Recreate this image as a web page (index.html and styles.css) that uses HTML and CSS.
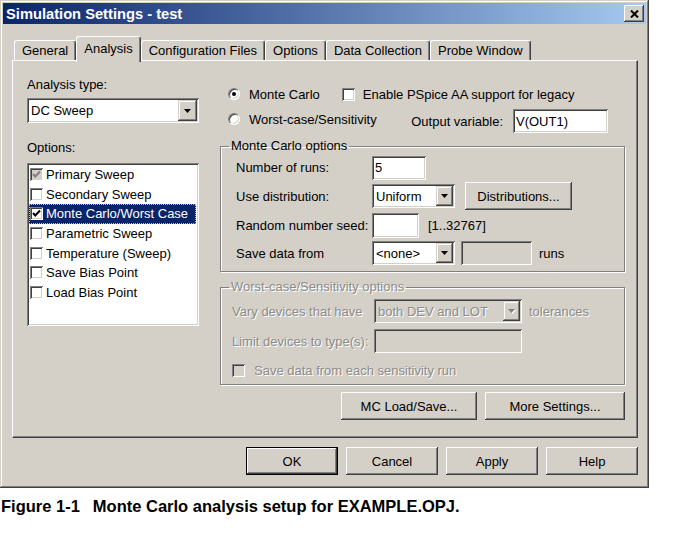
FILE: index.html
```html
<!DOCTYPE html>
<html>
<head>
<meta charset="utf-8">
<title>Simulation Settings - test</title>
<link rel="stylesheet" href="styles.css">
</head>
<body>
<div class="window">
  <div class="titlebar">
    <span class="title">Simulation Settings - test</span>
    <span class="close"><svg width="9" height="8" viewBox="0 0 9 8"><path d="M1 0.5 L8 7.5 M8 0.5 L1 7.5" stroke="#000" stroke-width="2" fill="none"/></svg></span>
  </div>
  <div class="tabs">
    <div class="tab">General</div>
    <div class="tab active">Analysis</div>
    <div class="tab">Configuration Files</div>
    <div class="tab">Options</div>
    <div class="tab">Data Collection</div>
    <div class="tab">Probe Window</div>
  </div>
  <div class="panel">
    <div class="left">
      <div class="lbl">Analysis type:</div>
      <div class="combo type-combo"><span class="val">DC Sweep</span><span class="arrow"><svg width="7" height="4" viewBox="0 0 7 4"><path d="M0 0 H7 L3.5 4 Z" fill="#000"/></svg></span></div>
      <div class="lbl options-lbl">Options:</div>
      <ul class="listbox">
        <li><span class="cb grayed"><svg width="9" height="9" viewBox="0 0 9 9"><path d="M1 4 L3.3 6.5 L8 1.5" fill="none" stroke="#808080" stroke-width="2"/></svg></span>Primary Sweep</li>
        <li><span class="cb"></span>Secondary Sweep</li>
        <li class="sel"><span class="cb"><svg width="9" height="9" viewBox="0 0 9 9"><path d="M1 4 L3.3 6.5 L8 1.5" fill="none" stroke="#000" stroke-width="2"/></svg></span><span class="sel-text">Monte Carlo/Worst Case</span></li>
        <li><span class="cb"></span>Parametric Sweep</li>
        <li><span class="cb"></span>Temperature (Sweep)</li>
        <li><span class="cb"></span>Save Bias Point</li>
        <li><span class="cb"></span>Load Bias Point</li>
      </ul>
    </div>
    <div class="right">
      <div class="row r1">
        <span class="radio on"></span><span class="rtext">Monte Carlo</span>
        <span class="cb enable-cb"></span><span class="cbtext">Enable PSpice AA support for legacy</span>
      </div>
      <div class="row r2">
        <span class="radio lift"></span><span class="rtext lift">Worst-case/Sensitivity</span>
        <span class="outvar-lbl">Output variable:</span>
        <span class="field outvar">V(OUT1)</span>
      </div>
      <fieldset class="group mc">
        <legend>Monte Carlo options</legend>
        <div class="mcgrid">
          <span>Number of runs:</span>
          <div class="ctl"><span class="field runs">5</span></div>
          <span>Use distribution:</span>
          <div class="ctl">
            <div class="combo small"><span class="val">Uniform</span><span class="arrow"><svg width="7" height="4" viewBox="0 0 7 4"><path d="M0 0 H7 L3.5 4 Z" fill="#000"/></svg></span></div>
            <button class="btn dist">Distributions...</button>
          </div>
          <span>Random number seed:</span>
          <div class="ctl"><span class="field seed"></span><span class="range">[1..32767]</span></div>
          <span>Save data from</span>
          <div class="ctl">
            <div class="combo small"><span class="val">&lt;none&gt;</span><span class="arrow"><svg width="7" height="4" viewBox="0 0 7 4"><path d="M0 0 H7 L3.5 4 Z" fill="#000"/></svg></span></div>
            <span class="field disabled runsfield"></span>
            <span class="runs-lbl">runs</span>
          </div>
        </div>
      </fieldset>
      <fieldset class="group wc">
        <legend class="dis">Worst-case/Sensitivity options</legend>
        <div class="wcgrid">
          <span class="dis">Vary devices that have</span>
          <div class="ctl">
            <div class="combo disabled wide2"><span class="val">both DEV and LOT</span><span class="arrow"><svg width="8" height="5" viewBox="0 0 8 5"><path d="M1 1 H8 L4.5 5 Z" fill="#fff"/><path d="M0 0 H7 L3.5 4 Z" fill="#808080"/></svg></span></div>
            <span class="dis tol">tolerances</span>
          </div>
          <span class="dis">Limit devices to type(s):</span>
          <div class="ctl"><span class="field disabled wide2"></span></div>
          <div class="span2">
            <span class="cb grayed-box"></span><span class="dis">Save data from each sensitivity run</span>
          </div>
        </div>
      </fieldset>
      <div class="btnrow">
        <button class="btn mcload">MC Load/Save...</button>
        <button class="btn more">More Settings...</button>
      </div>
    </div>
  </div>
  <div class="footer">
    <button class="btn dlg default">OK</button>
    <button class="btn dlg">Cancel</button>
    <button class="btn dlg">Apply</button>
    <button class="btn dlg">Help</button>
  </div>
</div>
<p class="caption"><span class="fig">Figure 1-1</span>Monte Carlo analysis setup for EXAMPLE.OPJ.</p>
</body>
</html>
```

FILE: styles.css
```css
* { box-sizing: border-box; }
body {
  margin: 0;
  background: #fff;
  font-family: "Liberation Sans", Arial, sans-serif;
  font-size: 13px;
  color: #000;
}
.window {
  width: 649px;
  height: 488px;
  background: #d4d0c8;
  padding: 3px;
  display: flex;
  flex-direction: column;
  box-shadow: inset -1px -1px #404040, inset 1px 1px #d4d0c8, inset -2px -2px #808080, inset 2px 2px #fff;
}
.titlebar {
  height: 21px;
  flex: none;
  display: flex;
  align-items: center;
  padding: 0 2px 0 3px;
  background: linear-gradient(to right, #0a246a, #a6caf0);
}
.title {
  flex: 1;
  color: #fff;
  font-weight: bold;
  font-size: 14.7px;
}
.close {
  width: 20px;
  height: 17px;
  display: flex;
  align-items: center;
  justify-content: center;
  background: #d4d0c8;
  box-shadow: inset -1px -1px #404040, inset 1px 1px #fff, inset -2px -2px #808080;
}
.tabs {
  flex: none;
  height: 24px;
  margin-top: 12px;
  padding-left: 11px;
  display: flex;
  align-items: flex-end;
}
.tab {
  height: 20px;
  padding: 0 7px;
  display: flex;
  align-items: center;
  border: 1px solid;
  border-bottom: none;
  border-color: #fff #404040 #fff #fff;
  border-radius: 3px 3px 0 0;
  box-shadow: inset -1px 0 #808080;
  background: #d4d0c8;
  white-space: nowrap;
}
.tab.active {
  height: 26px;
  margin-bottom: -2px;
  padding-bottom: 3px;
  position: relative;
  z-index: 1;
}
.panel {
  flex: none;
  height: 378px;
  margin: 0 8px 0 9px;
  border: 1px solid;
  border-color: #fff #404040 #404040 #fff;
  box-shadow: inset -1px -1px #808080;
  padding: 16px 0 0 14px;
  display: grid;
  grid-template-columns: 172px 405px;
  column-gap: 21px;
  align-items: start;
}
.lbl { height: 16px; line-height: 16px; }
.options-lbl { margin-top: 17px; }

.field {
  display: flex;
  align-items: center;
  background: #fff;
  padding: 0 3px;
  box-shadow: inset 1px 1px #808080, inset -1px -1px #fff, inset 2px 2px #404040, inset -2px -2px #d4d0c8;
  height: 24px;
  white-space: nowrap;
}
.field.disabled { background: #d4d0c8; }
.combo {
  display: flex;
  align-items: center;
  background: #fff;
  padding: 2px 2px 2px 4px;
  box-shadow: inset 1px 1px #808080, inset -1px -1px #fff, inset 2px 2px #404040, inset -2px -2px #d4d0c8;
  height: 24px;
}
.combo .val { flex: 1; white-space: nowrap; overflow: hidden; }
.combo .arrow {
  width: 17px;
  height: 100%;
  display: flex;
  align-items: center;
  justify-content: center;
  background: #d4d0c8;
  box-shadow: inset -1px -1px #404040, inset 1px 1px #d4d0c8, inset -2px -2px #808080, inset 2px 2px #fff;
}
.combo.disabled { background: #d4d0c8; }
.combo.disabled .val { color: #8c8c8c; text-shadow: 1px 1px #fff; }
.type-combo { margin-top: 5px; height: 25px; }
.type-combo .arrow { width: 19px; }

.listbox {
  list-style: none;
  margin: 7px 0 0;
  padding: 2px;
  height: 163px;
  background: #fff;
  box-shadow: inset 1px 1px #808080, inset -1px -1px #fff, inset 2px 2px #404040, inset -2px -2px #d4d0c8;
}
.listbox li {
  height: 19.6px;
  display: flex;
  align-items: center;
  gap: 3px;
  padding-left: 1px;
  white-space: nowrap;
}
.listbox li.sel {
  background: #0a246a;
  color: #fff;
  outline: 1px dotted #c8c080;
  outline-offset: -1px;
  margin-right: 1px;
}

.cb {
  width: 13px;
  height: 13px;
  flex: none;
  display: flex;
  align-items: center;
  justify-content: center;
  background: #fff;
  box-shadow: inset 1px 1px #808080, inset -1px -1px #fff, inset 2px 2px #404040, inset -2px -2px #d4d0c8;
}
.cb.grayed { background: #d4d0c8; }
.cb.grayed-box { background: #d4d0c8; }
.radio {
  width: 12px;
  height: 12px;
  flex: none;
  border-radius: 50%;
  border: 1px solid;
  border-color: #808080 #fff #fff #808080;
  background: #fff;
  box-shadow: inset 1px 1px #404040, inset -1px -1px #d4d0c8;
  display: flex;
  align-items: center;
  justify-content: center;
}
.radio.on::after {
  content: "";
  width: 4px;
  height: 4px;
  border-radius: 50%;
  background: #000;
}

.row { display: flex; align-items: center; padding-left: 8px; white-space: nowrap; }
.r1 { margin-top: 6px; height: 22px; }
.r2 { margin-top: 4px; height: 24px; padding-right: 17px; }
.rtext { margin-left: 9px; }
.lift { margin-bottom: 4px; }
.enable-cb { margin-left: 22px; }
.cbtext { margin-left: 8px; }
.outvar-lbl { margin-left: auto; }
.outvar { margin-left: 10px; width: 95px; }

.group {
  margin: 5px 0 0;
  padding: 0;
  min-width: 0;
  border: 1px solid #808080;
  box-shadow: 1px 1px #fff, inset 1px 1px #fff;
}
.group legend {
  margin-left: 8px;
  padding: 0 2px;
  line-height: 16px;
  height: 16px;
}
.mcgrid {
  display: grid;
  grid-template-columns: 136px auto;
  grid-template-rows: 27px 30px 28px 28px;
  align-items: center;
  padding: 0 0 4px 15px;
  white-space: nowrap;
}
.ctl { display: flex; align-items: center; }
.runs { width: 54px; }
.small { width: 83px; }
.dist { margin-left: 10px; width: 107px; height: 28px; }
.seed { width: 47px; height: 25px; }
.range { margin-left: 9px; }
.runsfield { margin-left: 6px; width: 71px; }
.runs-lbl { margin-left: 7px; }

.wc { margin-top: 7px; }
.dis { color: #8c8c8c; text-shadow: 1px 1px #fff; }
.wcgrid {
  display: grid;
  grid-template-columns: 142px auto;
  grid-template-rows: 30px 30px 28px;
  align-items: center;
  padding: 1px 0 0 11px;
  white-space: nowrap;
}
.wide2 { width: 148px; }
.tol { margin-left: 7px; }
.span2 { grid-column: 1 / 3; display: flex; align-items: center; gap: 9px; }

.btn {
  font: inherit;
  color: #000;
  border: none;
  background: #d4d0c8;
  padding: 0;
  box-shadow: inset -1px -1px #404040, inset 1px 1px #fff, inset -2px -2px #808080, inset 2px 2px #d4d0c8;
}
.btnrow {
  display: flex;
  justify-content: flex-end;
  gap: 8px;
  margin-top: 7px;
}
.mcload { width: 136px; height: 28px; }
.more { width: 140px; height: 28px; }

.footer {
  flex: none;
  display: flex;
  justify-content: flex-end;
  gap: 8px;
  margin: 9px 8px 0 0;
}
.dlg { width: 92px; height: 28px; }
.dlg.default {
  box-shadow: inset 0 0 0 1px #000, inset -2px -2px #404040, inset 2px 2px #fff, inset -3px -3px #808080;
}
.caption {
  margin: 9px 0 0 1px;
  font-weight: bold;
  font-size: 16.5px;
  line-height: 19px;
}
.fig { margin-right: 13px; }
```
